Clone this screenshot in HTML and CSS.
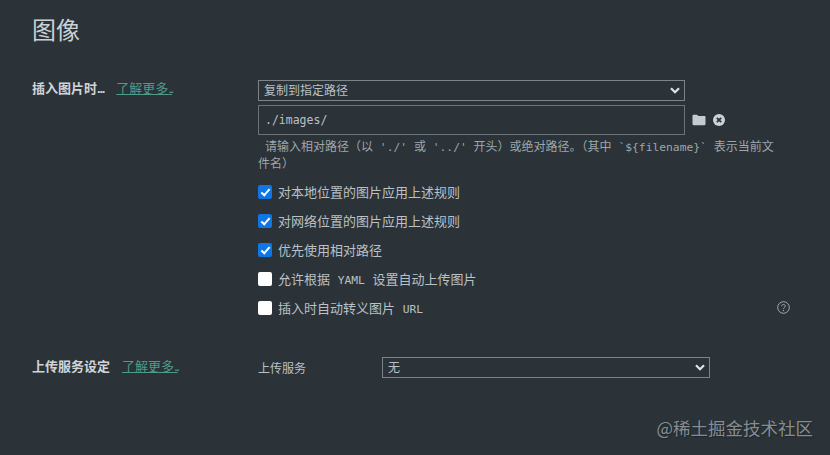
FILE: index.html
```html
<!DOCTYPE html>
<html lang="zh-CN">
<head>
<meta charset="utf-8">
<title>图像</title>
<link rel="stylesheet" href="styles.css">
</head>
<body>
<main class="page">
  <h1 class="title">图像</h1>
  <section class="group group-insert">
    <div class="group-head">
      <span class="group-name">插入图片时<span class="dots">...</span></span>
      <a class="more" href="#">了解更多<span class="dots">...</span></a>
    </div>
    <div class="group-body">
      <div class="select-wrap select-wide">
        <select class="select"><option>复制到指定路径</option></select>
        <svg class="chevron" viewBox="0 0 10 7" width="10" height="7"><path d="M1 1.200 5 5.200l4-4" fill="none" stroke="#dfe3e6" stroke-width="2.200"/></svg>
      </div>
      <div class="path-row">
        <input class="path" type="text" value="./images/">
        <svg class="icon-folder" viewBox="0 0 14 12" width="14" height="12"><path d="M0.500 2c0-.8.5-1.300 1.200-1.300h3.300l1.300 1.300h6.200c.7 0 1 .5 1 1.100v7c0 .7-.4 1.200-1.100 1.200H1.700c-.7 0-1.200-.5-1.200-1.200z" fill="#c3ccd2"/></svg>
        <svg class="icon-clear" viewBox="0 0 12 12" width="12" height="12"><circle cx="6" cy="6" r="6" fill="#ccd3d8"/><path d="M3.800 3.800l4.400 4.400M8.200 3.800 3.800 8.200" stroke="#2b3238" stroke-width="1.800"/></svg>
      </div>
      <p class="hint">请输入相对路径（以 <code>'./'</code> 或 <code>'../'</code> 开头）或绝对路径。（其中 <code>`${filename}`</code> <span>表示当前文</span><br><span>件名）</span></p>
      <ul class="options">
        <li><label class="option"><input type="checkbox" checked><span>对本地位置的图片应用上述规则</span></label></li>
        <li><label class="option"><input type="checkbox" checked><span>对网络位置的图片应用上述规则</span></label></li>
        <li><label class="option"><input type="checkbox" checked><span>优先使用相对路径</span></label></li>
        <li><label class="option"><input type="checkbox"><span>允许根据 <code>YAML</code> 设置自动上传图片</span></label></li>
        <li class="option-last">
          <label class="option"><input type="checkbox"><span>插入时自动转义图片 <code>URL</code></span></label>
          <svg class="icon-help" viewBox="0 0 13 13" width="13" height="13"><circle cx="6.500" cy="6.500" r="5.800" fill="none" stroke="#a3acb2" stroke-width="1"/><path d="M4.700 5.200c0-1 .8-1.700 1.800-1.700s1.800.7 1.800 1.600c0 1.300-1.800 1.400-1.800 2.700" fill="none" stroke="#a3acb2" stroke-width="1"/><circle cx="6.500" cy="9.500" r=".7" fill="#a3acb2"/></svg>
        </li>
      </ul>
    </div>
  </section>
  <section class="group group-upload">
    <div class="group-head">
      <span class="group-name">上传服务设定</span>
      <a class="more" href="#">了解更多<span class="dots">...</span></a>
    </div>
    <div class="upload-row">
      <span class="upload-label">上传服务</span>
      <div class="select-wrap select-service">
        <select class="select"><option>无</option></select>
        <svg class="chevron" viewBox="0 0 10 7" width="10" height="7"><path d="M1 1.200 5 5.200l4-4" fill="none" stroke="#dfe3e6" stroke-width="2.200"/></svg>
      </div>
    </div>
  </section>
</main>
<div class="watermark">@稀土掘金技术社区</div>
</body>
</html>
```
FILE: styles.css
```css
html, body {
  margin: 0;
  height: 100%;
  overflow: hidden;
}
body {
  background: #2b3238;
  color: #b9c1c6;
  font-family: "Liberation Sans", "Noto Sans CJK SC", sans-serif;
  font-size: 13px;
  position: relative;
}
.page {
  padding: 15px 40px 0 32px;
}
.title {
  margin: 0;
  font-size: 24px;
  font-weight: 400;
  line-height: 32px;
  color: #c9d1d6;
}
.group {
  display: grid;
  grid-template-columns: 226px minmax(0, 1fr);
}
.group-insert {
  margin-top: 33px;
}
.group-upload {
  margin-top: 41px;
}
.group-head {
  display: flex;
  align-items: baseline;
  gap: 12px;
  line-height: 18px;
  height: 18px;
}
.group-upload .group-head {
  margin-top: 1px;
}
.group-name {
  font-weight: 700;
  color: #cfd5d9;
}
.dots {
  letter-spacing: -1.200px;
}
.more {
  color: #4d9c88;
  text-decoration: underline;
}
.more .dots {
  letter-spacing: -2.400px;
}
.group-body {
  display: flex;
  flex-direction: column;
}
.select-wrap {
  position: relative;
  box-sizing: border-box;
  height: 21px;
}
.select-wide {
  width: 427px;
}
.select-service {
  width: 328px;
}
.select {
  appearance: none;
  display: block;
  box-sizing: border-box;
  width: 100%;
  height: 100%;
  padding: 0 5px;
  border: 1px solid #7b8489;
  border-radius: 0;
  background: transparent;
  color: #b9c1c6;
  font: inherit;
  font-size: 12px;
}
.chevron {
  position: absolute;
  right: 5px;
  top: 7px;
  pointer-events: none;
}
.path-row {
  display: flex;
  align-items: center;
  margin-top: 4px;
}
.path {
  box-sizing: border-box;
  width: 427px;
  height: 30px;
  padding: 0 6px;
  border: 1px solid #6a7378;
  border-radius: 0;
  background: transparent;
  color: #b9c1c6;
  font-family: "DejaVu Sans Mono", monospace;
  font-size: 11.500px;
}
.icon-folder {
  margin-left: 7px;
}
.icon-clear {
  margin-left: 7px;
}
.hint {
  margin: 4px 0 0;
  white-space: nowrap;
  text-indent: 7px;
  font-size: 12px;
  line-height: 17px;
  color: #9ea7ac;
}
code {
  font-family: "DejaVu Sans Mono", monospace;
  font-size: 11.300px;
}
.hint code {
  margin: 0 3.500px;
}
.option code {
  margin: 0 4px;
}
.options {
  list-style: none;
  margin: 9px 0 0;
  padding: 0;
  display: flex;
  flex-direction: column;
  gap: 11px;
}
.option {
  display: flex;
  align-items: center;
  height: 18px;
  color: #b9c1c6;
}
.option input {
  appearance: none;
  box-sizing: border-box;
  width: 14px;
  height: 14px;
  margin: 2px 6px 0 0;
  background: #fff;
  border-radius: 2px;
  position: relative;
}
.option input:checked {
  background: #0f76e6;
}
.option input:checked::after {
  content: "";
  position: absolute;
  left: 4.500px;
  top: 1.500px;
  width: 3px;
  height: 7px;
  border: solid #fff;
  border-width: 0 2px 2px 0;
  transform: rotate(42deg);
}
.option-last {
  display: flex;
  justify-content: space-between;
  align-items: center;
}
.upload-row {
  display: flex;
  align-items: center;
}
.upload-label {
  width: 124px;
  font-size: 12px;
}
.watermark {
  position: absolute;
  right: 17px;
  bottom: 17px;
  font-size: 17.500px;
  line-height: 20px;
  color: #868d92;
  font-family: "Noto Sans CJK SC", sans-serif;
  text-shadow: 1px 1px 1px #1f2529;
}
```
